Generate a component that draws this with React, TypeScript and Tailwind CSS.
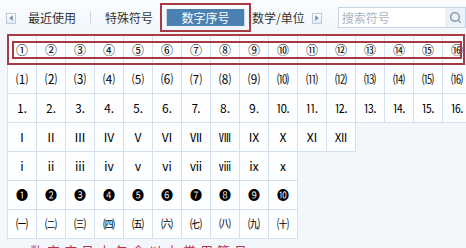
import { Search } from "lucide-react";

const rows: string[][] = [
  ["①", "②", "③", "④", "⑤", "⑥", "⑦", "⑧", "⑨", "⑩", "⑪", "⑫", "⑬", "⑭", "⑮", "⑯"],
  ["⑴", "⑵", "⑶", "⑷", "⑸", "⑹", "⑺", "⑻", "⑼", "⑽", "⑾", "⑿", "⒀", "⒁", "⒂", "⒃"],
  ["⒈", "⒉", "⒊", "⒋", "⒌", "⒍", "⒎", "⒏", "⒐", "⒑", "⒒", "⒓", "⒔", "⒕", "⒖", "⒗"],
  ["Ⅰ", "Ⅱ", "Ⅲ", "Ⅳ", "Ⅴ", "Ⅵ", "Ⅶ", "Ⅷ", "Ⅸ", "Ⅹ", "Ⅺ", "Ⅻ"],
  ["ⅰ", "ⅱ", "ⅲ", "ⅳ", "ⅴ", "ⅵ", "ⅶ", "ⅷ", "ⅸ", "ⅹ"],
  ["❶", "❷", "❸", "❹", "❺", "❻", "❼", "❽", "❾", "❿"],
  ["㈠", "㈡", "㈢", "㈣", "㈤", "㈥", "㈦", "㈧", "㈨", "㈩"],
];

// little scroll arrow button beside the tabs
const ArrowButton = ({ dir }: { dir: "left" | "right" }) => (
  <div className="w-[10px] h-[11px] border border-[#b9cadb] bg-gradient-to-b from-white to-[#e4edf5] flex items-center justify-center">
    <svg width="4" height="6" viewBox="0 0 4 6">
      {dir === "left" ? (
        <path d="M4 0 L0 3 L4 6 Z" fill="#8a9aab" />
      ) : (
        <path d="M0 0 L4 3 L0 6 Z" fill="#8a9aab" />
      )}
    </svg>
  </div>
);

const App = () => {
  return (
    <div
      className="w-[466px] h-[248px] overflow-hidden bg-[#f3f7fb] relative"
      style={{ fontFamily: '"Noto Sans CJK SC", "DejaVu Sans", sans-serif' }}
    >
      {/* tab bar */}
      <div className="h-[35px] flex items-center bg-gradient-to-b from-[#fbfdff] to-[#f1f6fb] text-[12px] text-[#333]">
        <div className="ml-[6px] mt-[1px]">
          <ArrowButton dir="left" />
        </div>
        <span className="ml-[12px]">最近使用</span>
        <span className="ml-[14px] w-px h-[13px] bg-[#cdd8e3]" />
        <span className="ml-[14px]">特殊符号</span>
        <div className="ml-[7px] h-[29px] w-[91px] border-2 border-[#a83a44] flex items-center justify-center">
          <div className="h-[17px] w-[79px] bg-[#4b80b1] border-x border-[#c9d9e8] text-white flex items-center justify-center">
            数字序号
          </div>
        </div>
        <span className="ml-[1px]">数学/单位</span>
        <div className="ml-[7px] mt-[1px]">
          <ArrowButton dir="right" />
        </div>
        <div className="ml-[16px] h-[21px] flex-1 border border-[#c6d5e3] bg-white flex items-center">
          <span className="pl-[3px] flex-1 text-[#a9b4bf]">搜索符号</span>
          <div className="w-[20px] h-full bg-[#eaf1f8] flex items-center justify-center">
            <Search size={13} strokeWidth={2.5} color="#7f93a8" />
          </div>
        </div>
      </div>

      {/* symbol grid */}
      <div className="pl-[8px] pt-px text-[12px] text-black">
        {rows.map((row, i) => (
          <div key={i} className="flex -mt-px">
            {row.map((s) => (
              <div
                key={s}
                className="shrink-0 w-[30px] h-[30px] -ml-px border border-[#d3e2ee] bg-[#fdfeff] flex items-center justify-center leading-none"
              >
                {s}
              </div>
            ))}
          </div>
        ))}
      </div>

      {/* caption below the grid, mostly cut off */}
      <div className="pl-[30px] mt-[4px] text-[13px] leading-[16px] text-[#b8324a] tracking-[4px]">
        数字序号中包含以上常用符号
      </div>

      {/* red highlight around the first row */}
      <div className="absolute left-[7px] top-[34px] w-[458px] h-[31px] border-2 border-[#a83a44]" />
      <div className="absolute left-[12px] top-[41px] w-[450px] h-[18px] border-2 border-[#a83a44]" />
    </div>
  );
};

export default App;
